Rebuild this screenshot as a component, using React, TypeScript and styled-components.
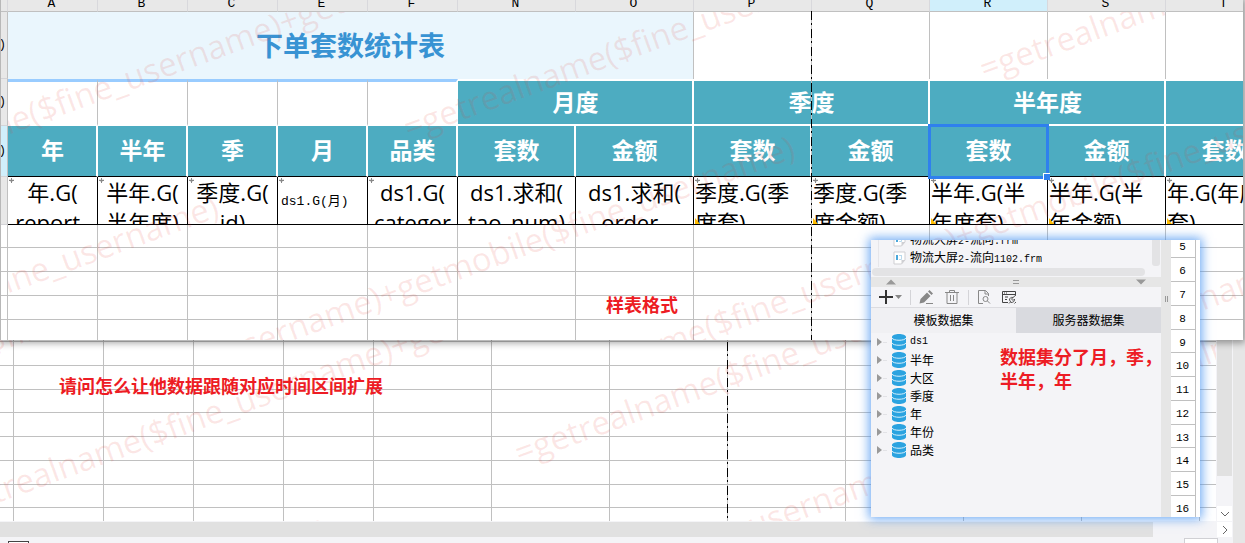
import React from "react";
import styled, { createGlobalStyle, css } from "styled-components";

const sans = `"Open Sans", "Noto Sans CJK SC", sans-serif`;
const cjk = `"Noto Sans CJK SC", sans-serif`;
const mono = `"Liberation Mono", "Noto Sans CJK SC", monospace`;
const line = "#c0c0c0";
const teal = "#4dacc1";

const Global = createGlobalStyle`
  * { box-sizing: border-box; }
  body { margin: 0; background: #f4f4f7; font-family: ${cjk}; color: #000; }
  button { font: inherit; color: inherit; border: 0; padding: 0; background: none; }
`;

const Page = styled.main`
  position: relative;
  min-height: 100vh;
  overflow: hidden;
`;

/* ---------- shared sheet parts ---------- */

const Grid = styled.table`
  table-layout: fixed;
  width: 0;
  border-collapse: separate;
  border-spacing: 0;
  th, td { padding: 0; font-weight: 400; }
`;

const Row = styled.tr<{ $h: number }>`
  height: ${(p) => p.$h}px;
`;

const Cell = styled.td<{ $plain?: boolean }>`
  border-right: 1px solid ${line};
  border-bottom: ${(p) => (p.$plain ? "0" : `1px solid ${line}`)};
`;

const PageBreak = styled.div<{ $x: number; $top: number }>`
  position: absolute;
  left: ${(p) => p.$x}px;
  top: ${(p) => p.$top}px;
  bottom: 0;
  width: 1px;
  background: repeating-linear-gradient(#000 0 9px, ${line} 9px 12px, #000 12px 14px, ${line} 14px 18px);
`;

const WatermarkLayer = styled.div<{ $x: number; $y: number }>`
  position: absolute;
  left: ${(p) => p.$x}px;
  top: ${(p) => p.$y}px;
  right: 0;
  bottom: 0;
  overflow: hidden;
  pointer-events: none;
`;

const Mark = styled.span<{ $x: number; $y: number }>`
  position: absolute;
  left: ${(p) => p.$x}px;
  top: ${(p) => p.$y}px;
  font: 33px/40px ${sans};
  white-space: nowrap;
  color: rgba(225, 60, 50, 0.12);
  transform: rotate(-20deg);
  transform-origin: 10px 20px;
`;

const MARK = "=getrealname($fine_username)+getmobile($fine_username)";

function Watermarks({ x, y, at }: { x: number; y: number; at: number[][] }) {
  return (
    <WatermarkLayer $x={x} $y={y} aria-hidden>
      {at.map(([mx, my]) => (
        <Mark key={`${mx},${my}`} $x={mx - x - 10} $y={my - y - 20}>{MARK}</Mark>
      ))}
    </WatermarkLayer>
  );
}

/* ---------- back sheet ---------- */

const Workbook = styled.section`
  display: flex;
  background: #e6e6e6;
  padding-right: 12px;
`;

const WorkbookBody = styled.div`
  flex: 1;
  min-width: 0;
`;

const SheetRow = styled.div`
  display: flex;
`;

const BackSheet = styled.div`
  position: relative;
  flex: 1;
  min-width: 0;
  overflow: hidden;
  background: #fff;
`;

const VTrack = styled.div`
  display: flex;
  flex-direction: column;
  width: 17px;
  padding: 0 1px;
  background: #f4f4f7;
`;

const VThumb = styled.div`
  flex: 1;
  margin-bottom: 30px;
  background: #e1e1e1;
`;

const HTrack = styled.div`
  display: flex;
  height: 16px;
  padding-top: 1px;
  padding-right: 1px;
  background: #f4f4f7;
`;

const HThumb = styled.div`
  flex: 1;
  margin-right: 64px;
  background: #e1e1e1;
`;

const ScrollButton = styled.button`
  display: flex;
  align-items: center;
  justify-content: center;
  width: 15px;
  height: 15px;
  background: #fff;
`;

const StatusBar = styled.div`
  display: flex;
  justify-content: space-between;
  height: 6px;
  padding: 1px 15px 0 8px;
  overflow: hidden;
  background: #f4f4f7;
`;

const SheetTab = styled.div`
  width: 21px;
  margin-top: 3px;
  border: 1px solid #444;
  border-bottom: 0;
  background: #fff;
`;

const ZoomBox = styled.div`
  width: 34px;
  border: 1px solid #d0d0d4;
  border-bottom: 0;
  background: #fff;
`;

const backCols = [14, 90, 90, 90, 90, 118, 118, 118, 118, 118, 118, 118, 118];
const backRows = [6, ...Array(14).fill(24), 24, 24, 23, 24, 24, 24, 23, 13];

/* ---------- front sheet ---------- */

const FrontSheet = styled.section`
  position: absolute;
  top: 0;
  left: 0;
  right: 2px;
  overflow: hidden;
  border-left: 1px solid #b8b8b8;
  background: #fff;
`;

const FrontShadow = styled.div`
  position: absolute;
  top: 0;
  left: 0;
  right: 2px;
  height: 340px;
  box-shadow: 0 1px 7px 2px rgba(0, 0, 0, 0.36);
`;

const ColHead = styled.th<{ $active?: boolean }>`
  border-right: 1px solid #d8d8dc;
  border-bottom: 1px solid ${line};
  background: ${(p) => (p.$active ? "#d0effb" : "#e8e8e8")};
`;

const ColLetter = styled.div`
  height: 11px;
  overflow: hidden;
  padding-right: 2px;
  font: 13px/8px ${mono};
`;

const RowHead = styled.th<{ $active?: boolean }>`
  border-right: 1px solid ${line};
  border-bottom: 1px solid #d4d4d8;
  background: ${(p) => (p.$active ? "#d0effb" : "#e8e8e8")};
  font: 12px/16px ${mono};
`;

const RowHeadText = styled.div`
  display: flex;
  justify-content: flex-end;
  width: 5px;
`;

const TitleCell = styled.th`
  border-right: 1px solid ${line};
  background: #eaf6fd;
  color: #3893d3;

  && { padding-bottom: 2px; font: 700 27px/40px ${cjk}; }
`;

const BlankCell = styled.td<{ $last?: boolean }>`
  border-top: 3px solid #99ccff;
  border-right: ${(p) => (p.$last ? "2px solid #fff" : `1px solid ${line}`)};
  border-bottom: 2px solid #fff;
`;

const tealHead = css`
  background: ${teal};
  color: #fff;
  border-right: 2px solid #fff;
  && { padding: 0 0 4px 1px; font: 700 23px/32px ${cjk}; }
`;

const GroupHead = styled.th`
  ${tealHead}
  border-top: 2px solid #fff;
  border-bottom: 2px solid #fff;
`;

const FieldHead = styled.th`
  ${tealHead}
  position: relative;
  border-bottom: 1px solid #000;
  white-space: nowrap;
`;

const Selection = styled.div`
  position: absolute;
  z-index: 1;
  inset: -2px -3px -3px -2px;
  border: 3px solid #2f80ee;

  &::after {
    content: "";
    position: absolute;
    right: -4px;
    bottom: -4px;
    width: 6px;
    height: 6px;
    border: solid #fff;
    border-width: 1px 0 0 1px;
    background: #2f80ee;
  }
`;

const FormulaCell = styled.td`
  position: relative;
  border-right: 1px solid #000;
  border-bottom: 1px solid #000;
`;

const Formula = styled.div<{ $left?: boolean }>`
  height: 47px;
  padding-left: ${(p) => (p.$left ? 1 : 0)}px;
  overflow: hidden;
  font: 22px/30px ${sans};
  text-align: ${(p) => (p.$left ? "left" : "center")};
  white-space: nowrap;
`;

const MonoFormula = styled.div`
  padding: 2px 0 0 3px;
  font: 13px/20px ${mono};
`;

const ExpandMark = styled.svg`
  position: absolute;
  left: 1px;
  top: 1px;
`;

const ParentMark = styled.svg`
  position: absolute;
  left: 1px;
  bottom: 0;
`;

const letters = ["A", "B", "C", "E", "F", "N", "O", "P", "Q", "R", "S", "T"];
const fields = ["年", "半年", "季", "月", "品类", "套数", "金额", "套数", "金额", "套数", "金额", "套数"];
const formulas = [
  ["年.G(", "report_"],
  ["半年.G(", "半年度)"],
  ["季度.G(", "id)"],
  ["ds1.G(月)"],
  ["ds1.G(", "categor"],
  ["ds1.求和(", "tao_num)"],
  ["ds1.求和(", "order_"],
  ["季度.G(季", "度套)"],
  ["季度.G(季", "度金额)"],
  ["半年.G(半", "年度套)"],
  ["半年.G(半", "年金额)"],
  ["年.G(年度", "套)"],
];

/* ---------- dataset panel ---------- */

const Panel = styled.section`
  position: absolute;
  left: 871px;
  top: 240px;
  display: flex;
  width: 329px;
  height: 277px;
  overflow: hidden;
  background: #f4f4f7;
`;

const PanelGlow = styled.div`
  position: absolute;
  left: 871px;
  top: 240px;
  width: 329px;
  height: 277px;
  box-shadow: 0 0 10px 2px rgba(60, 140, 240, 0.75);
`;

const PanelMain = styled.div`
  display: flex;
  flex-direction: column;
  width: 290px;
`;

const FileArea = styled.div`
  display: flex;
  justify-content: space-between;
  height: 27px;
`;

const Files = styled.ul`
  display: flex;
  flex-direction: column;
  justify-content: flex-end;
  margin: 0 0 0 7px;
  padding: 0;
  overflow: hidden;
  list-style: none;
  border-left: 1px solid #e6e6ea;
`;

const Item = styled.li<{ $indent?: number }>`
  display: flex;
  flex: none;
  align-items: center;
  gap: 4px;
  height: 18px;
  padding-left: ${(p) => p.$indent ?? 0}px;
  font: 12px/18px ${cjk};
  white-space: nowrap;
`;

const Latin = styled.span`
  font: 10px/18px ${mono};
`;

const FilesThumb = styled.div`
  width: 8px;
  height: 26px;
  margin-right: 1px;
  border-radius: 0 0 3px 3px;
  background: #e3e3e5;
`;

const FilesHThumb = styled.div`
  height: 8px;
  margin: 1px 16px 1px 1px;
  border-radius: 4px;
  background: #e3e3e5;
`;

const Splitter = styled.div`
  display: flex;
  align-items: center;
  justify-content: space-between;
  height: 10px;
  padding: 0 15px;
  background: #e6e6e6;
`;

const Toolbar = styled.div`
  display: flex;
  align-items: center;
  height: 21px;
  padding-left: 8px;
  border-bottom: 1px solid #dcdce0;
`;

const Tool = styled.button<{ $w: number }>`
  display: flex;
  align-items: center;
  justify-content: center;
  gap: 1px;
  width: ${(p) => p.$w}px;
  height: 18px;
`;

const AddTool = styled(Tool)`
  justify-content: flex-start;
`;

const Divider = styled.i`
  width: 1px;
  height: 15px;
  margin: 0 2px 0 3px;
  background: #d4d4d8;
`;

const Tabs = styled.div`
  display: flex;
  height: 25px;
`;

const Tab = styled.button<{ $active?: boolean }>`
  flex: 1;
  padding-bottom: 2px;
  background: ${(p) => (p.$active ? "#f0f0f3" : "#d9dadf")};
  font: 12px/22px ${cjk};
`;

const Datasets = styled.ul`
  margin: 0;
  padding: 0 0 0 6px;
  list-style: none;
`;

const SideSplitter = styled.div`
  display: flex;
  justify-content: center;
  gap: 1px;
  width: 10px;
  padding-top: 56px;
  background: #e6e6e6;
`;

const Grip = styled.i`
  width: 1px;
  height: 6px;
  background: #999;
`;

const Numbers = styled.div`
  flex: 1;
  padding-right: 4px;
  background: linear-gradient(${line}, ${line}) right 4px top / 1px 100% no-repeat #fff;
`;

const NumberCell = styled.div<{ $h: number }>`
  height: ${(p) => p.$h}px;
  padding-right: 2px;
  border-bottom: 1px solid ${line};
  font: 11px/26px ${mono};
  text-align: center;
`;

const numberRows = [24, 24, 24, 24, 23, 24, 24, 24, 23, 24, 24, 24];

const NumberStack = styled.div`
  display: flex;
  flex-direction: column;
  margin-top: -6px;
`;

/* ---------- annotations ---------- */

const Note = styled.p<{ $x: number; $y: number }>`
  position: absolute;
  left: ${(p) => p.$x}px;
  top: ${(p) => p.$y}px;
  margin: 0;
  color: #ed1c24;
  font: 700 18px/24px ${cjk};
  white-space: nowrap;
`;

/* ---------- icons ---------- */

const Database = () => (
  <svg width="14" height="16" viewBox="0 0 14 16">
    <path d="M0 3C0 -1 14 -1 14 3V13C14 17 0 17 0 13Z" fill="#2ba3e0" />
    <path d="M0 4C1 7 13 7 14 4M0 9C1 12 13 12 14 9" fill="none" stroke="#d8f0fb" />
  </svg>
);

const FileIcon = () => (
  <svg width="13" height="14" viewBox="0 0 13 14">
    <path d="M1 1H12V9L8.5 13H1Z" fill="#fff" stroke="#cfcfd3" />
    <path d="M12 9H8.5V13Z" fill="#cfcfd3" />
    <path d="M3 4H5V9H3Z" fill="#4aa8dc" />
    <path d="M6 4.5H9M8.5 4.5V8.5H6" fill="none" stroke="#b9d9ec" />
  </svg>
);

const Triangle = ({ d, color = "#999" }: { d: string; color?: string }) => (
  <svg width="10" height="6" viewBox="0 0 10 6"><path d={d} fill={color} /></svg>
);

export default function App() {
  return (
    <Page>
      <Global />
      <Workbook>
        <WorkbookBody>
          <SheetRow>
            <BackSheet>
              <Grid>
                <colgroup>{backCols.map((w, i) => <col key={i} width={w} />)}</colgroup>
                <tbody>
                  {backRows.map((h, r) => (
                    <Row key={r} $h={h}>
                      {backCols.map((_, c) => <Cell key={c} $plain={r === backRows.length - 1} />)}
                    </Row>
                  ))}
                </tbody>
              </Grid>
              <PageBreak $x={727} $top={0} />
              <Watermarks x={0} y={0} at={[[-627, 567], [-51, 508], [525, 450], [1101, 391], [-527, 840], [49, 781]]} />
            </BackSheet>
            <VTrack>
              <VThumb />
              <ScrollButton aria-label="向下滚动">
                <svg width="10" height="6" viewBox="0 0 10 6"><path d="M1 1L5 5L9 1" fill="none" stroke="#666" /></svg>
              </ScrollButton>
            </VTrack>
          </SheetRow>
          <HTrack>
            <HThumb />
            <ScrollButton aria-label="向右滚动">
              <svg width="6" height="10" viewBox="0 0 6 10"><path d="M1 1L5 5L1 9" fill="none" stroke="#666" /></svg>
            </ScrollButton>
          </HTrack>
          <StatusBar><SheetTab /><ZoomBox /></StatusBar>
        </WorkbookBody>
      </Workbook>

      <FrontShadow />
      <FrontSheet>
        <Grid>
          <colgroup>
            <col width={7} />
            {letters.map((l, i) => <col key={l} width={i < 5 ? 90 : 118} />)}
          </colgroup>
          <thead>
            <Row $h={12}>
              <ColHead />
              {letters.map((l) => <ColHead key={l} scope="col" $active={l === "R"}><ColLetter>{l}</ColLetter></ColHead>)}
            </Row>
          </thead>
          <tbody>
            <Row $h={67}>
              <RowHead><RowHeadText>)</RowHeadText></RowHead>
              <TitleCell colSpan={7}>下单套数统计表</TitleCell>
              {[0, 1, 2, 3, 4].map((i) => <Cell key={i} $plain />)}
            </Row>
            <Row $h={47}>
              <RowHead><RowHeadText>)</RowHeadText></RowHead>
              {[0, 1, 2, 3, 4].map((i) => <BlankCell key={i} $last={i === 4} />)}
              <GroupHead colSpan={2}>月度</GroupHead>
              <GroupHead colSpan={2}>季度</GroupHead>
              <GroupHead colSpan={2}>半年度</GroupHead>
              <GroupHead />
            </Row>
            <Row $h={51}>
              <RowHead $active><RowHeadText>)</RowHeadText></RowHead>
              {fields.map((f, i) => <FieldHead key={i}>{f}{i === 9 && <Selection />}</FieldHead>)}
            </Row>
            <Row $h={48}>
              <RowHead />
              {formulas.map((lines, i) => (
                <FormulaCell key={i}>
                  {lines.length === 1 ? (
                    <MonoFormula>{lines[0]}</MonoFormula>
                  ) : (
                    <Formula $left={i > 6}>{lines[0]}<br />{lines[1]}</Formula>
                  )}
                  {i !== 5 && i !== 6 && (
                    <ExpandMark width="5" height="6" viewBox="0 0 5 6">
                      <path d="M2.5 0V5M0 2.5H5M1 1.5L2.5 4L4 1.5" fill="none" stroke="#888" />
                    </ExpandMark>
                  )}
                  {i > 6 && (
                    <ParentMark width="5" height="6" viewBox="0 0 5 6"><path d="M0 0L5 6H0Z" fill="#ffbe00" /></ParentMark>
                  )}
                </FormulaCell>
              ))}
            </Row>
            {[23, 24, 24, 24, 20].map((h, r) => (
              <Row key={r} $h={h}>
                <Cell $plain={r === 4} />
                {letters.map((l) => <Cell key={l} $plain={r === 4} />)}
              </Row>
            ))}
          </tbody>
        </Grid>
        <PageBreak $x={810} $top={11} />
        <Watermarks
          x={7}
          y={12}
          at={[[-163, 184], [413, 125], [989, 66], [-639, 516], [-63, 457], [513, 398], [1089, 339]]}
        />
      </FrontSheet>

      <PanelGlow />
      <Panel aria-label="数据集">
        <PanelMain>
          <FileArea>
            <Files>
              <Item $indent={14}><FileIcon /><span>物流大屏<Latin>2-</Latin>流向<Latin>.frm</Latin></span></Item>
              <Item $indent={14}><FileIcon /><span>物流大屏<Latin>2-</Latin>流向<Latin>1102.frm</Latin></span></Item>
            </Files>
            <FilesThumb />
          </FileArea>
          <FilesHThumb />
          <Splitter>
            <Triangle d="M0 5.500L5 0.500L10 5.500Z" />
            <svg width="8" height="4" viewBox="0 0 8 4"><path d="M1 0.500H7M1 3.500H7" stroke="#999" /></svg>
            <Triangle d="M0 0.500L5 5.500L10 0.500Z" />
          </Splitter>
          <Toolbar>
            <AddTool $w={28} aria-label="新增">
              <svg width="15" height="14" viewBox="0 0 15 14"><path d="M7 0V14M0 7H14" stroke="#333" strokeWidth="2" /></svg>
              <svg width="7" height="4" viewBox="0 0 7 4"><path d="M0 0H7L3.500 4Z" fill="#888" /></svg>
            </AddTool>
            <Divider />
            <Tool $w={26} aria-label="编辑">
              <svg width="14" height="14" viewBox="0 0 14 14">
                <path d="M0.500 13.500L1.500 9L8 2.500L11.500 6L5 12.500ZM9 1.500L10.500 0L14 3.500L12.500 5Z" fill="#888" />
                <path d="M7 13.500H14" stroke="#888" />
              </svg>
            </Tool>
            <Tool $w={26} aria-label="删除">
              <svg width="14" height="14" viewBox="0 0 14 14">
                <path d="M0 2.500H14M4.500 2V0.500H9.500V2M2 2.500V13.500H12V2.500M5.500 5V11M8.500 5V11" fill="none" stroke="#888" />
              </svg>
            </Tool>
            <Divider />
            <Tool $w={25} aria-label="预览">
              <svg width="14" height="14" viewBox="0 0 14 14">
                <path d="M6 13.500H1.500V0.500H8.500L11.500 3.500V6M8 0.500V4H11.500" fill="none" stroke="#888" />
                <circle cx="8.500" cy="9" r="2.500" fill="none" stroke="#888" />
                <path d="M10.500 11L13 13.500" stroke="#888" />
              </svg>
            </Tool>
            <Tool $w={25} aria-label="连接设置">
              <svg width="14" height="14" viewBox="0 0 14 14">
                <path d="M6 12.500H0.500V1.500H13.500V5M0.500 4.500H13.500M2 3H3M4 3H5M3 7H6M3 9.500H5" fill="none" stroke="#444" />
                <path d="M7.500 10C7.500 8 9 7 11 7.500L9.500 9L11 10.500L12.500 9C13 11 11.500 12.500 9 12.500Z" fill="none" stroke="#555" />
                <path d="M11 7.500L14 5M7 13.500L8.500 12M12.500 13.500L14 12" stroke="#555" />
              </svg>
            </Tool>
          </Toolbar>
          <Tabs role="tablist">
            <Tab role="tab" aria-selected $active>模板数据集</Tab>
            <Tab role="tab" aria-selected={false}>服务器数据集</Tab>
          </Tabs>
          <Datasets>
            {["ds1", "半年", "大区", "季度", "年", "年份", "品类"].map((name) => (
              <Item key={name}>
                <svg width="11" height="8" viewBox="0 0 11 8">
                  <path d="M0 0L5 4L0 8Z" fill="#999" />
                  <path d="M6 4.500H10" stroke="#e2e2e6" />
                </svg>
                <Database />
                {name === "ds1" ? <Latin>{name}</Latin> : name}
              </Item>
            ))}
          </Datasets>
        </PanelMain>
        <SideSplitter><Grip /><Grip /></SideSplitter>
        <Numbers>
          <NumberStack>
            {numberRows.map((h, i) => <NumberCell key={i} $h={h}>{i + 5}</NumberCell>)}
          </NumberStack>
        </Numbers>
      </Panel>

      <Note $x={606} $y={292}>样表格式</Note>
      <Note $x={59} $y={373}>请问怎么让他数据跟随对应时间区间扩展</Note>
      <Note $x={1000} $y={344}>数据集分了月，季，<br />半年，年</Note>
    </Page>
  );
}
